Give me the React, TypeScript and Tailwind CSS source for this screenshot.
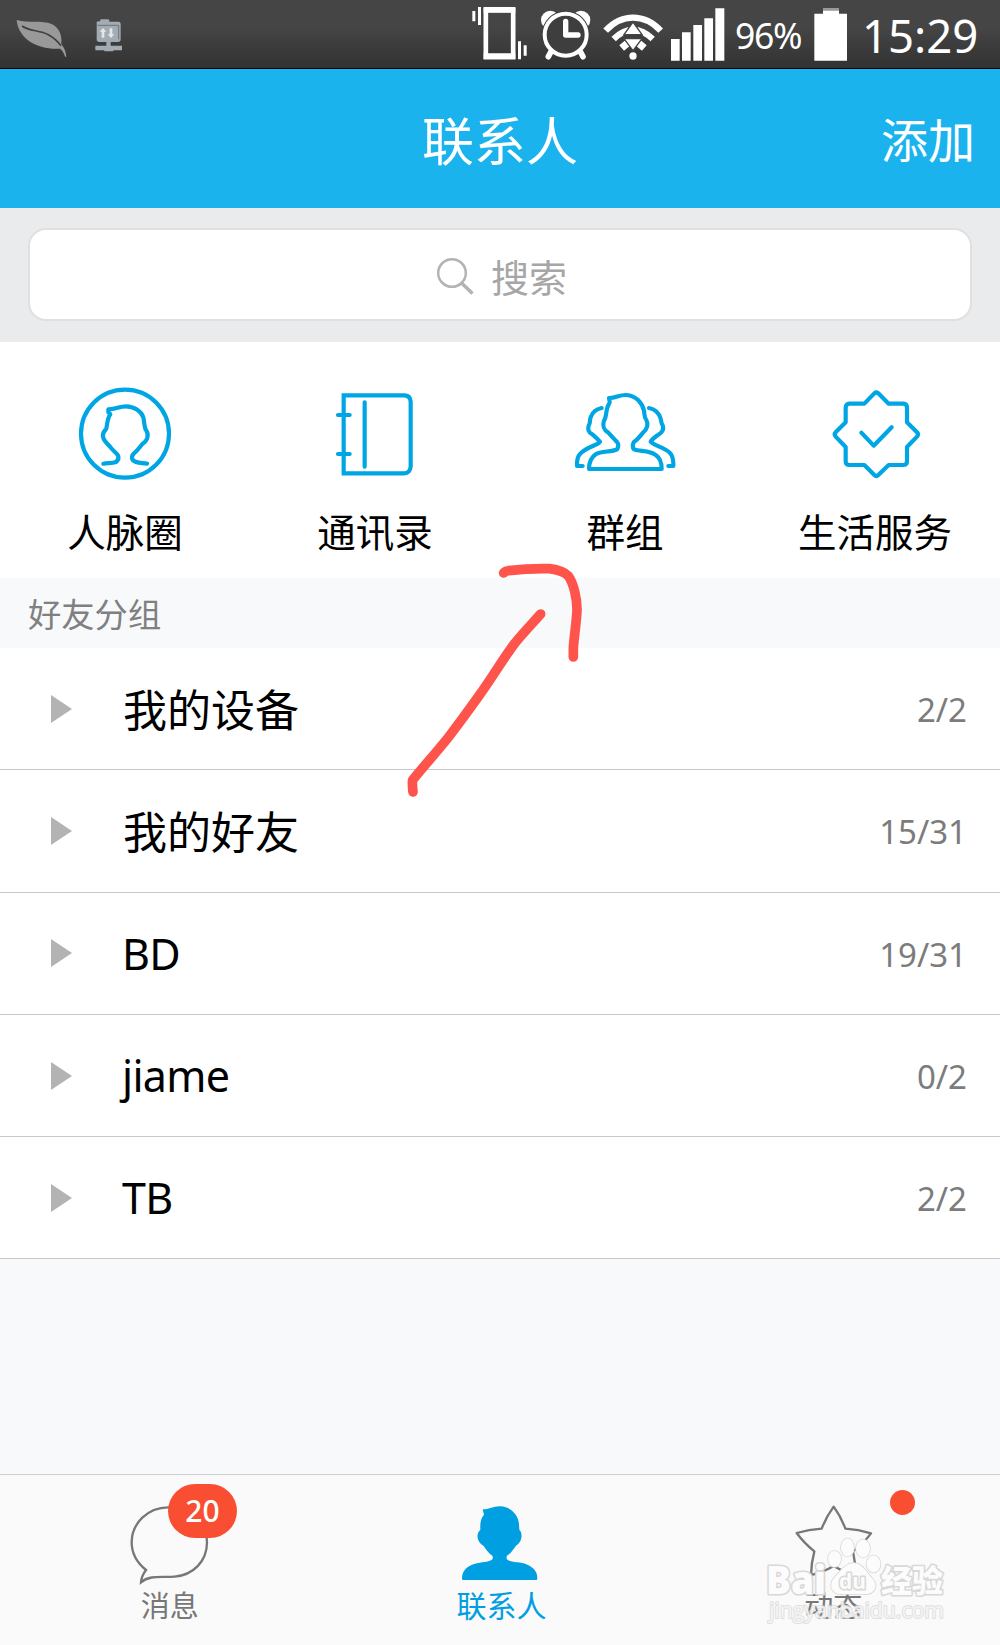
import type { ReactNode } from "react";

function ShortcutIcon({ x, children }: { x: number; children: ReactNode }) {
  return (
    <svg
      width="120"
      height="100"
      viewBox={`${x} 129 360 300`}
      fill="none"
      stroke="#00a5e3"
      strokeWidth="12.500"
      strokeLinecap="round"
      strokeLinejoin="round"
    >
      {children}
    </svg>
  );
}

const shortcuts = [
  {
    label: "人脉圈",
    icon: (
      <ShortcutIcon x={195}>
        <circle cx="375" cy="281" r="132" />
        <path d="M441 371 C425 368 407 370 398 360 C394 353 396 346 402 340 C412 332 420 320 428 311 C443 302 447 285 439 272 C432 262 434 250 430 232 C424 214 402 199 378 199 C358 199 345 209 325 208 V217 L331 223 C322 235 322 250 319 266 C316 272 307 275 309 290 C311 304 322 310 330 320 C338 332 347 336 354 346 C357 354 355 361 348 366 C336 371 322 368 310 371" />
      </ShortcutIcon>
    ),
  },
  {
    label: "通讯录",
    icon: (
      <ShortcutIcon x={946}>
        <path
          strokeLinecap="butt"
          strokeLinejoin="miter"
          d="M1032 166 H1215 Q1233 168 1233 186 V380 Q1231 400 1213 400 H1032 Z"
        />
        <path d="M1095 187 V380 M1015 225 H1050 M1015 342 H1050" />
      </ShortcutIcon>
    ),
  },
  {
    label: "群组",
    icon: (
      <ShortcutIcon x={196}>
        <path d="M328 174 C348 175 358 164 380 165 C410 167 428 190 433 212 C435 225 433 232 440 240 C447 252 443 268 430 278 C420 290 415 298 402 307 C398 315 398 322 403 328 C420 335 450 330 468 345 C480 353 486 368 486 387 H268 C268 365 275 352 288 343 C305 332 335 337 352 328 C357 320 357 312 352 306 C342 295 335 288 326 278 C312 270 308 255 313 242 C320 232 319 215 323 203 C324 196 331 190 330 185 Z" />
        <path d="M306 204 C290 208 280 213 273 232 C269 243 273 248 267 257 C263 268 267 277 278 283 C285 289 294 296 301 305 C298 316 260 319 240 343 C231 353 232 365 232 378 H249" />
        <path d="M448 204 C464 207 477 217 483 236 C486 244 483 248 489 256 C494 268 489 276 476 284 C468 290 458 296 453 305 C458 316 496 321 512 340 C522 351 521 365 521 378 H506" />
      </ShortcutIcon>
    ),
  },
  {
    label: "生活服务",
    icon: (
      <ShortcutIcon x={946}>
        <path d="M1124 160 Q1130 155 1136 160 L1167 191 H1211 Q1222 192 1222 203 V247 L1252 277 Q1258 283 1252 290 L1222 321 V364 Q1222 375 1211 375 H1167 L1136 405 Q1130 411 1124 405 L1094 375 H1049 Q1038 375 1038 364 V321 L1008 290 Q1002 283 1008 277 L1038 247 V203 Q1039 192 1049 191 H1094 Z" />
        <path d="M1085 278 L1122 317 L1176 262" />
      </ShortcutIcon>
    ),
  },
];

const groups = [
  { name: "我的设备", count: "2/2" },
  { name: "我的好友", count: "15/31" },
  { name: "BD", count: "19/31" },
  { name: "jiame", count: "0/2" },
  { name: "TB", count: "2/2" },
];

function StatusBar() {
  return (
    <div className="flex h-[69px] items-center border-b border-black bg-linear-to-b from-[#454545] from-40% to-[#323232] text-white">
      {/* leaf */}
      <svg className="ml-4" width="52" height="68" viewBox="48 0 156 204">
        <path
          fill="#999"
          d="M50 60 C85 70 125 60 155 72 C178 82 187 108 184 132 C192 142 198 155 199 170 L195 170 C192 160 188 151 180 146 C150 148 110 142 83 120 C62 103 52 82 50 60Z"
        />
        <path
          d="M66 78 C88 94 118 90 145 104 C162 113 173 124 183 137"
          fill="none"
          stroke="#404040"
          strokeWidth="5"
        />
      </svg>
      {/* file transfer */}
      <svg className="ml-[26px]" width="30" height="68" viewBox="282 0 90 204">
        <path
          fill="#a3abb3"
          d="M290 66 Q290 64 300 64 L302 58 H326 L329 65 H357 Q362 66 362 72 V118 Q362 126 354 126 H332 V137 H366 V151 H340 V154 H313 V151 H286 V137 H319 V126 H298 Q290 126 290 118Z"
        />
        <path stroke="#6c747b" strokeWidth="3" d="M292 76 H356 V118" fill="none" />
        <path
          fill="#e4e8eb"
          d="M309 84 L319 95 H313 V113 H305 V95 H299Z M333 114 L343 103 H337 V85 H329 V103 H323Z"
        />
      </svg>
      {/* vibrate */}
      <svg className="ml-[346px]" width="58" height="68" viewBox="30 0 174 204">
        <rect x="77.5" y="30" width="82" height="141" fill="none" stroke="#fff" strokeWidth="14" />
        <path d="M71 21H166V38H71Z M71 160H166V178H71Z M37 33H46V64H37Z M54 21H63V75H54Z M174 124H183V178H174Z M191 136H200V167H191Z" fill="#fff" />
      </svg>
      {/* alarm */}
      <svg className="ml-3" width="52" height="68" viewBox="240 0 156 204">
        <circle cx="271" cy="60" r="28" fill="#fff" />
        <circle cx="363" cy="60" r="28" fill="#fff" />
        <circle cx="317" cy="104" r="72" fill="#3e3e3e" />
        <g fill="none" stroke="#fff" strokeLinecap="round">
          <circle cx="317" cy="104" r="63" strokeWidth="12" />
          <path strokeWidth="17" d="M273 155 L265 170 M361 155 L369 170" />
          <path strokeWidth="16" strokeLinejoin="round" d="M317 64 V105 H354" />
        </g>
      </svg>
      {/* wifi */}
      <svg className="ml-2.5" width="64" height="68" viewBox="427 0 192 204">
        <g fill="none" stroke="#fff" strokeWidth="19">
          <path d="M438 92 Q474 53 520 53 Q567 53 603 92" />
          <path d="M462 117 Q490 90 520 89 Q551 90 579 117" />
          <path d="M486 144 L504 129 M554 144 L536 129" strokeWidth="22" />
        </g>
        <circle cx="520" cy="168" r="11" fill="#fff" />
        <path d="M520 66 L547 104 H493Z M520 152 L493 116 H547Z" fill="#fff" stroke="#444" strokeWidth="4" />
        <path d="M490 110 H550" stroke="#3e3e3e" strokeWidth="8" />
      </svg>
      {/* signal */}
      <svg className="ml-1" width="56" height="68" viewBox="632 0 168 204">
        <path fill="#fff" d="M635 117H661V182H635Z M668 97H694V182H668Z M702 75H728V182H702Z M735 55H761V182H735Z M768 25H795V182H768Z" />
      </svg>
      <span className="ml-[9px] w-[68px] pt-1 text-[35.500px] leading-none tracking-[-1.3px]">96%</span>
      <svg className="ml-[11px]" width="34" height="68" viewBox="255 0 102 204">
        <path fill="#999" d="M282 24H330V34H282Z" />
        <path fill="#fff" d="M282 32H330V41H354V182H256V41H282Z" />
      </svg>
      <span className="ml-3.5 pt-[3px] text-[45.500px] leading-none whitespace-nowrap">15:29</span>
    </div>
  );
}

function TabBar() {
  return (
    <nav className="grid h-[171px] grid-cols-3 border-t border-[#cfcfd1] bg-[#fafafa] text-[29px] leading-none text-[#777]">
      <div className="relative flex flex-col items-center">
        <svg width="120" height="115" viewBox="322 45 360 345">
          <path
            fill="none"
            stroke="#777"
            strokeWidth="7"
            d="M439 330 C405 303 396 276 396 247 C396 190 445 142 505 142 C570 142 622 188 622 247 C622 305 580 345 525 350 C485 353 450 344 424 367 C425 352 430 342 439 330Z"
          />
        </svg>
        <span className="pt-px pl-1.5">消息</span>
        <span className="absolute top-[9px] left-[168px] flex h-[54px] w-[69px] items-center justify-center rounded-full bg-[#fa4e32] text-[30px] font-medium text-white">
          20
        </span>
      </div>
      <div className="flex flex-col items-center text-[#009fe1]">
        <svg width="120" height="115" viewBox="1 45 360 345">
          <path
            fill="currentColor"
            d="M129 148 C150 149 160 138 183 139 C215 141 236 166 238 192 L239 209 C250 219 248 246 229 257 C221 269 212 281 201 288 V297 C215 310 240 303 265 315 C285 325 293 337 293 356 Q293 360 289 360 H71 Q67 360 67 356 C67 336 76 323 97 314 C122 304 148 309 159 297 V288 C148 281 139 269 132 258 C111 246 108 222 122 209 C121 190 123 175 133 164Z"
          />
        </svg>
        <span className="pt-px pl-[3px] text-[30px] leading-[29px]">联系人</span>
      </div>
      <div className="relative flex flex-col items-center">
        <svg width="120" height="115" viewBox="102 45 360 345">
          <path
            fill="none"
            stroke="#777"
            strokeWidth="7"
            strokeLinejoin="round"
            d="M284 140 Q306 170 319 206 Q358 208 396 220 Q372 252 342 274 Q350 310 350 349 Q315 337 284 318 Q252 337 216 345 Q217 308 226 274 Q195 249 173 219 Q210 208 248 206 Q262 170 284 140Z"
          />
        </svg>
        <span className="pt-px">动态</span>
        <span className="absolute top-[15px] left-[223px] size-[25px] rounded-full bg-[#fa4e32]" />
      </div>
    </nav>
  );
}

function Watermark() {
  return (
    <svg className="absolute top-[1530px] left-[760px]" width="200" height="100" viewBox="0 0 200 100">
      <g fill="#fcfcfc" stroke="#d8d8d8" strokeWidth="1.6" strokeLinejoin="round" paintOrder="stroke">
        <ellipse cx="74.500" cy="29" rx="6.5" ry="8" />
        <ellipse cx="87.500" cy="17.500" rx="6.5" ry="9" />
        <ellipse cx="103" cy="18.5" rx="7" ry="9" />
        <ellipse cx="113.500" cy="34" rx="7" ry="8.500" />
        <path d="M94 33 C102 33 106 42 112 48 C120 57 113 65 104 64 H83 C72 65 68 56 74 48 C80 42 85 33 94 33Z" />
        <g fontFamily="'Open Sans', 'Noto Sans', sans-serif" fontWeight="800" strokeWidth="3.200">
          <text x="6" y="63.500" fontSize="38" textLength="60" lengthAdjust="spacingAndGlyphs">Bai</text>
          <text x="79" y="59" fontSize="22" fontWeight="700" textLength="27" lengthAdjust="spacingAndGlyphs">du</text>
          <text x="121" y="62" fontSize="31" textLength="62" fontFamily="'Noto Sans CJK SC', sans-serif">经验</text>
        </g>
        <text
          x="9"
          y="88"
          fontSize="21"
          fontWeight="500"
          strokeWidth="2"
          fillOpacity="0.75"
          strokeOpacity="0.75"
          textLength="175"
          lengthAdjust="spacingAndGlyphs"
          fontFamily="'Open Sans', sans-serif"
        >
          jingyanbaidu.com
        </text>
      </g>
    </svg>
  );
}

export default function App() {
  return (
    <div className="relative flex h-[1645px] w-[1000px] flex-col overflow-hidden bg-[#f8f9fb] font-['Noto_Sans','Noto_Sans_CJK_SC',sans-serif]">
      <StatusBar />

      <header className="grid h-[139px] grid-cols-3 items-center bg-[#1ab3ee] pt-1 leading-none text-white">
        <h1 className="col-start-2 text-center text-[52px]">联系人</h1>
        <button className="pr-[25px] text-right text-[47px]">添加</button>
      </header>

      <div className="h-[134px] bg-[#eaebec] px-7 pt-5">
        <div className="flex h-[93px] items-center justify-center gap-[17px] rounded-[18px] border-2 border-[#e0e0e0] bg-white pt-0.5 pl-1 text-[38px] leading-none text-[#a6a6a6]">
          <svg width="37" height="38" viewBox="0 0 37 38" fill="none" stroke="#b3b3b3" strokeWidth="2.500">
            <circle cx="15" cy="16" r="13.800" />
            <path d="M24.500 26 L35.500 36.500" strokeWidth="3.500" />
          </svg>
          <span className="pt-0.5">搜索</span>
        </div>
      </div>

      <div className="grid h-[236px] grid-cols-4 bg-white pt-[41px]">
        {shortcuts.map((item) => (
          <div key={item.label} className="flex flex-col items-center gap-[30px] text-[38.500px] leading-none text-black">
            {item.icon}
            <span>{item.label}</span>
          </div>
        ))}
      </div>

      <h2 className="flex h-[70px] items-center px-7 pt-[3px] text-[33.300px] leading-none text-[#808080]">好友分组</h2>

      <ul>
        {groups.map((group) => (
          <li
            key={group.name}
            className="flex h-[122.3px] items-center border-b border-[#c8c9cd] bg-white pr-[33px] pl-[51px]"
          >
            <svg width="21" height="28" viewBox="0 0 21 28">
              <path d="M0 0 L21 14 L0 28Z" fill="#b3b3b3" />
            </svg>
            {/[a-z]/i.test(group.name) ? (
              <span className="ml-[50px] text-[43px] leading-none tracking-[-0.7px] text-black">{group.name}</span>
            ) : (
              <span className="ml-[51px] pt-[3px] text-[44px] leading-none text-black">{group.name}</span>
            )}
            <span className="mt-0.5 ml-auto text-[33px] leading-none text-[#7c7c7c]">{group.count}</span>
          </li>
        ))}
      </ul>

      <div className="flex-1" />
      <TabBar />

      {/* hand-drawn arrow pointing at the groups shortcut */}
      <svg
        className="pointer-events-none absolute top-[540px] left-[380px]"
        width="260"
        height="280"
        viewBox="0 0 780 840"
        fill="none"
        stroke="#ff544c"
        strokeWidth="29"
        strokeLinecap="round"
        strokeLinejoin="round"
      >
        <path d="M371 99 Q372 94 385 92 C420 88 465 85 508 86 C532 89 555 97 565 108 C581 130 591 175 591 208 C590 245 582 290 580 325 V351" />
        <path d="M482 222 C460 247 430 278 405 309 C370 355 335 415 295 470 C265 512 235 553 205 592 C170 636 130 680 98 720 Q96 730 99 756" />
      </svg>
      <Watermark />
    </div>
  );
}
